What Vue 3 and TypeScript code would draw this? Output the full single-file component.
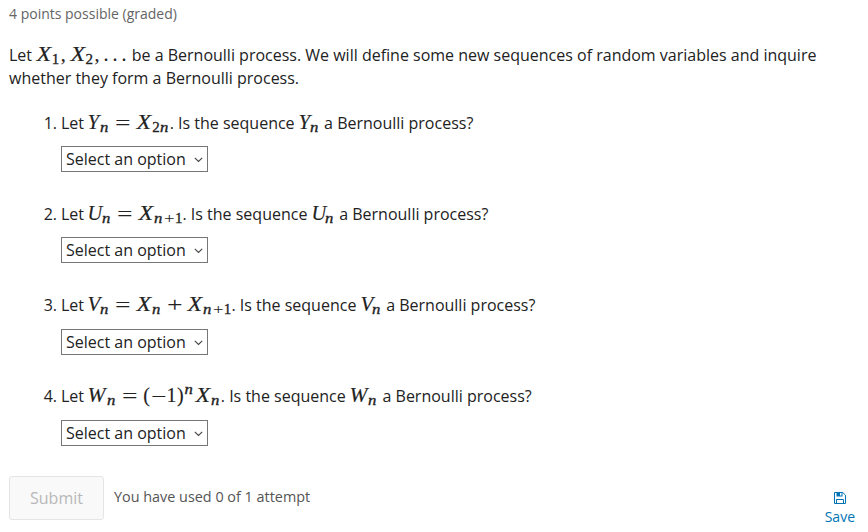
<script setup lang="ts">
import { ref } from 'vue'

type Kind = 'var' | 'sub' | 'subnum' | 'sup' | 'num' | 'op' | 'punct' | 'text'

interface Token {
  kind: Kind
  text: string
  /** advance width in px; plain text keeps its own width */
  w?: number
}

const v = (text: string, w: number): Token => ({ kind: 'var', text, w })
const sub = (text: string, w: number): Token => ({ kind: 'sub', text, w })
const subnum = (text: string, w: number): Token => ({ kind: 'subnum', text, w })
const sup = (text: string, w: number): Token => ({ kind: 'sup', text, w })
const num = (text: string, w: number): Token => ({ kind: 'num', text, w })
const op = (text: string, w: number): Token => ({ kind: 'op', text, w })
const punct = (text: string, w: number): Token => ({ kind: 'punct', text, w })
const txt = (text: string): Token => ({ kind: 'text', text })

const intro: Token[] = [
  txt('Let '),
  v('X', 15.6), subnum('1', 9), punct(',', 9),
  v('X', 15.6), subnum('2', 9), punct(',', 9.2),
  punct('.', 9), punct('.', 9), punct('.', 6),
  txt(' be a Bernoulli process. We will define some new sequences of random variables and inquire whether they form a Bernoulli process.'),
]

const questions: Token[][] = [
  [
    txt('Let '), v('Y', 11.5), sub('n', 15.3), op('=', 21.2), v('X', 16.1), subnum('2', 7.4), sub('n', 10),
    txt('. Is the sequence '), v('Y', 11.5), sub('n', 9.7), txt(' a Bernoulli process?'),
  ],
  [
    txt('Let '), v('U', 13.7), sub('n', 15.3), op('=', 21.2), v('X', 16.1), sub('n', 9.5), subnum('+', 11), subnum('1', 7.5),
    txt('. Is the sequence '), v('U', 13.7), sub('n', 9.8), txt(' a Bernoulli process?'),
  ],
  [
    txt('Let '), v('V', 11.5), sub('n', 15.3), op('=', 21.2), v('X', 16.1), sub('n', 14.4), op('+', 20.2),
    v('X', 16.1), sub('n', 9.6), subnum('+', 11.1), subnum('1', 7.8),
    txt('. Is the sequence '), v('V', 11.5), sub('n', 10), txt(' a Bernoulli process?'),
  ],
  [
    txt('Let '), v('W', 18.5), sub('n', 15.6), op('=', 21), num('(', 7.7), op('−', 15.5), num('1', 10.5), num(')', 7.2),
    sup('n', 10.6), v('X', 16), sub('n', 10),
    txt('. Is the sequence '), v('W', 18.5), sub('n', 10), txt(' a Bernoulli process?'),
  ],
]

const answers = ref<string[]>(questions.map(() => ''))
</script>

<template>
  <main class="problem">
    <div class="progress">4 points possible (graded)</div>
    <p class="intro">
      <template v-for="(t, i) in intro" :key="i"><template v-if="t.kind === 'text'">{{ t.text }}</template><span v-else class="math" :style="{ width: t.w + 'px' }"><span class="glyph" :class="[t.kind, 'g-' + t.text]">{{ t.text }}</span></span></template>
    </p>

    <ol class="questions">
      <li v-for="(q, qi) in questions" :key="qi" class="question">
        <span class="marker">{{ qi + 1 }}.</span>
        <div class="stem"><template v-for="(t, i) in q" :key="i"><template v-if="t.kind === 'text'">{{ t.text }}</template><span v-else class="math" :style="{ width: t.w + 'px' }"><span class="glyph" :class="[t.kind, 'g-' + t.text]">{{ t.text }}</span></span></template></div>
        <div class="field">
          <select v-model="answers[qi]" class="select">
            <option value="">Select an option</option>
            <option value="yes">Yes</option>
            <option value="no">No</option>
          </select>
          <svg class="chevron" width="9" height="6" viewBox="0 0 9 6" aria-hidden="true">
            <path d="M.8.8 4.5 4.5 8.2.8" fill="none" stroke="#444" stroke-width="1.1" />
          </svg>
        </div>
      </li>
    </ol>

    <footer class="actions">
      <button class="submit" disabled>Submit</button>
      <span class="attempts">You have used 0 of 1 attempt</span>
      <button class="save">
        <svg width="12" height="12" viewBox="0 0 12 12" aria-hidden="true">
          <path d="M.5.5h8.3l2.7 2.7v8.3H.5z" fill="none" stroke="currentColor" />
          <path d="M2.5.5h6v4h-6z" fill="currentColor" />
          <path d="M6 1h1.5v2.5H6z" fill="#fff" />
          <path d="M2.5 11.5v-4h7v4" fill="none" stroke="currentColor" />
        </svg>
        <span>Save</span>
      </button>
    </footer>
  </main>
</template>

<style>
body {
  margin: 0;
  background: #fff;
}
</style>

<style scoped>
.problem {
  box-sizing: border-box;
  width: 868px;
  height: 532px;
  padding: 4px 9px 0;
  overflow: hidden;
  font: 16px/23px "Open Sans", sans-serif;
  color: #222;
}
.progress {
  font-size: 14px;
  line-height: 20px;
  color: #646464;
}
.intro {
  margin: 20px 0 0;
}
.questions {
  margin: 21.6px 0 0;
  padding: 0 0 0 52px;
  list-style: none;
}
.question {
  position: relative;
  height: 91.25px;
}
.marker {
  position: absolute;
  right: 100%;
  margin-right: 4px;
}
.stem {
  height: 23px;
  white-space: pre;
}
.math {
  display: inline-block;
  line-height: 0;
  white-space: nowrap;
}
.glyph {
  display: inline-block;
  font-family: "Liberation Serif", serif;
  font-size: 20px;
  line-height: 0;
  transform-origin: 0 0;
  -webkit-text-stroke: 0.15px currentColor;
}
.var {
  font-style: italic;
  transform: translateX(0.6px) scaleX(1.2);
}
.g-Y,
.g-V {
  transform: translateX(-0.5px) scaleX(1.05);
}
.g-U {
  transform: translateX(-0.5px) scaleX(1.02);
}
.g-W {
  transform: translateX(-0.5px) scaleX(1.08);
}
.sub,
.sup {
  font-size: 14.5px;
  font-style: italic;
  -webkit-text-stroke-width: 0.35px;
  transform: translateY(3px) scaleX(1.15);
}
.sup {
  transform: translate(0.5px, -8px) scaleX(1.15);
}
.subnum {
  font-size: 15px;
  -webkit-text-stroke-width: 0.3px;
  transform: translateY(3px);
}
.subnum.g-\+ {
  -webkit-text-stroke-width: 0;
  transform: translateY(3px) scaleX(1.25);
}
.op {
  -webkit-text-stroke-width: 0;
  transform: translateY(1px) scaleX(1.38);
}
.field {
  position: relative;
  width: 147px;
  height: 26px;
  margin-top: 11.5px;
}
.question:nth-child(n + 3) .field {
  margin-top: 12px;
}
.select {
  display: block;
  box-sizing: border-box;
  width: 147px;
  height: 26px;
  margin: 0;
  padding: 0 4px;
  border: 1px solid #767676;
  border-radius: 0;
  appearance: none;
  background: #fff;
  font: inherit;
  color: #222;
}
.chevron {
  position: absolute;
  right: 5px;
  top: 11px;
}
.actions {
  display: flex;
  align-items: flex-start;
  margin-top: -1px;
}
.submit {
  width: 95px;
  height: 44px;
  padding: 1px 0 0;
  border: 1px solid #e5e5e5;
  border-radius: 3px;
  background: #f9f9f9;
  font: inherit;
  color: #b8b8b8;
}
.attempts {
  margin: 11px 0 0 10px;
  font-size: 14.4px;
  line-height: 20px;
  color: #555;
}
.save {
  display: flex;
  flex-direction: column;
  align-items: center;
  gap: 3px;
  margin: 16px 4px 0 auto;
  padding: 0;
  border: 0;
  background: none;
  font: 14px/20px "Open Sans", sans-serif;
  color: #0075b4;
}
</style>
